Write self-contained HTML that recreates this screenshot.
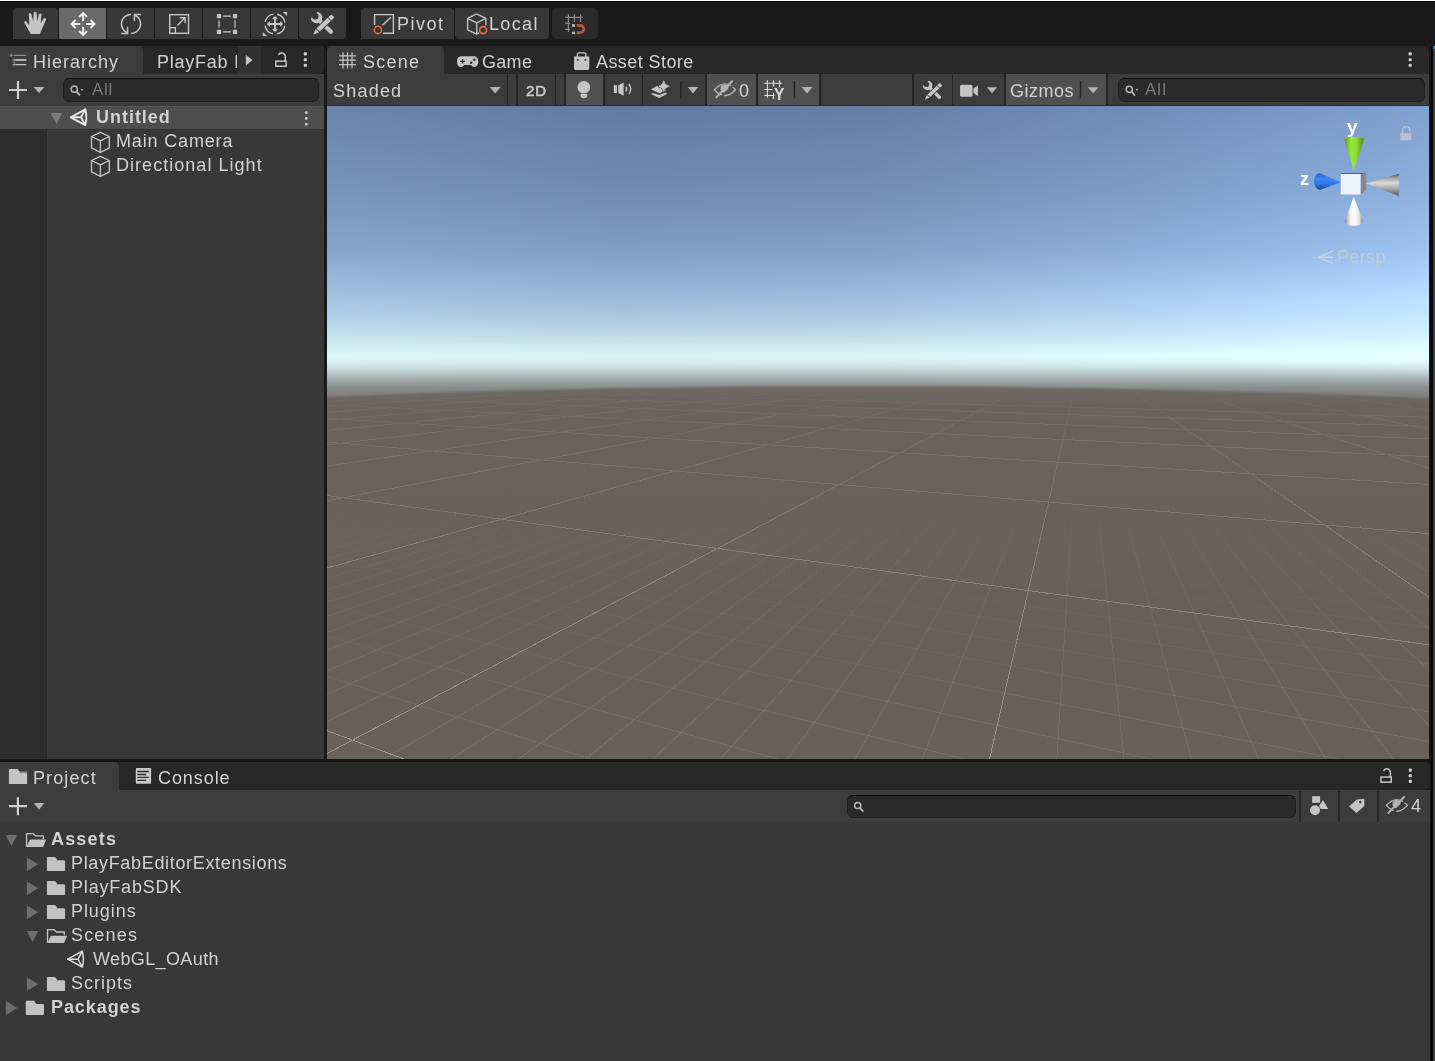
<!DOCTYPE html>
<html><head><meta charset="utf-8"><title>Unity</title>
<style>
html,body{margin:0;padding:0;background:#191919;overflow:hidden;}
body{width:1435px;height:1061px;position:relative;overflow:hidden;font-family:"Liberation Sans",sans-serif;}
.a{position:absolute;}
.t{position:absolute;white-space:pre;will-change:transform;}
svg{position:absolute;overflow:visible;}
</style></head><body>
<div class="a" style="left:0px;top:0px;width:1435px;height:1px;background:#ffffff;"></div>
<div class="a" style="left:0px;top:1px;width:1435px;height:1px;background:#0a0a0a;"></div>
<div class="a" style="left:0px;top:2px;width:1435px;height:44px;background:#191919;"></div>
<div class="a" style="left:13px;top:8px;width:45px;height:31px;background:#383838;border-radius:4px 4px 0 0;"></div>
<div class="a" style="left:59px;top:8px;width:47px;height:31px;background:#6a6a6a;"></div>
<div class="a" style="left:107px;top:8px;width:47px;height:31px;background:#383838;"></div>
<div class="a" style="left:155px;top:8px;width:47px;height:31px;background:#383838;"></div>
<div class="a" style="left:203px;top:8px;width:47px;height:31px;background:#383838;"></div>
<div class="a" style="left:251px;top:8px;width:47px;height:31px;background:#383838;"></div>
<div class="a" style="left:299px;top:8px;width:47px;height:31px;background:#383838;border-radius:0 0 4px 4px;"></div>
<div class="a" style="left:361px;top:8px;width:92.5px;height:31px;background:#383838;border-radius:4px 4px 0 0;"></div>
<div class="a" style="left:455px;top:8px;width:94px;height:31px;background:#383838;border-radius:0 0 4px 4px;"></div>
<div class="a" style="left:551.6px;top:7.8px;width:46.799999999999955px;height:31.499999999999996px;background:#2a2a2a;border-radius:5px;"></div>
<div class="a" style="left:0px;top:46px;width:324px;height:28px;background:#282828;border-radius:0 0 5px 0;"></div>
<div class="a" style="left:0px;top:46px;width:143px;height:28px;background:#3c3c3c;border-radius:0 5px 0 0;"></div>
<div class="a" style="left:237.6px;top:46px;width:23.400000000000006px;height:28px;background:#313131;"></div>
<div class="a" style="left:0px;top:74px;width:324px;height:32px;background:#3c3c3c;"></div>
<div class="a" style="left:0px;top:106px;width:324px;height:653px;background:#383838;"></div>
<div class="a" style="left:0px;top:106px;width:47px;height:653px;background:#2d2d2d;"></div>
<div class="a" style="left:46px;top:130px;width:1px;height:629px;background:#2a2a2a;"></div>
<div class="a" style="left:47px;top:130px;width:1px;height:629px;background:#3b3b3b;"></div>
<div class="a" style="left:0px;top:106px;width:324px;height:23px;background:#4e4e4e;"></div>
<div class="a" style="left:0px;top:106px;width:324px;height:1px;background:#545454;"></div>
<div class="a" style="left:0px;top:129px;width:324px;height:1px;background:#303030;"></div>
<div class="a" style="left:63px;top:78px;width:256px;height:24px;background:#2a2a2a;border-radius:6px;box-sizing:border-box;border:1px solid #212121;border-top-color:#0d0d0d;"></div>
<div class="a" style="left:324px;top:46px;width:3px;height:713px;background:#191919;"></div>
<div class="a" style="left:327px;top:46px;width:1102px;height:28px;background:#282828;border-radius:0 5px 0 0;"></div>
<div class="a" style="left:327px;top:46px;width:117px;height:28px;background:#3c3c3c;border-radius:5px 5px 0 0;"></div>
<div class="a" style="left:327px;top:74px;width:1102px;height:32px;background:#3c3c3c;"></div>
<div class="a" style="left:565.5px;top:74px;width:38.10000000000002px;height:31px;background:#505050;"></div>
<div class="a" style="left:707px;top:74px;width:49px;height:31px;background:#505050;"></div>
<div class="a" style="left:758px;top:74px;width:61px;height:31px;background:#505050;"></div>
<div class="a" style="left:1006px;top:74px;width:100px;height:31px;background:#505050;"></div>
<div class="a" style="left:506.8px;top:74px;width:1.5px;height:31px;background:#242424;"></div>
<div class="a" style="left:516.4px;top:74px;width:1.5px;height:31px;background:#242424;"></div>
<div class="a" style="left:554.8px;top:74px;width:1.5px;height:31px;background:#242424;"></div>
<div class="a" style="left:564.2px;top:74px;width:1.5px;height:31px;background:#242424;"></div>
<div class="a" style="left:603.4px;top:74px;width:1.5px;height:31px;background:#242424;"></div>
<div class="a" style="left:641.8px;top:74px;width:1.5px;height:31px;background:#242424;"></div>
<div class="a" style="left:705.4px;top:74px;width:1.5px;height:31px;background:#242424;"></div>
<div class="a" style="left:756.2px;top:74px;width:1.5px;height:31px;background:#242424;"></div>
<div class="a" style="left:819px;top:74px;width:1.5px;height:31px;background:#242424;"></div>
<div class="a" style="left:912.2px;top:74px;width:1.5px;height:31px;background:#242424;"></div>
<div class="a" style="left:951.6px;top:74px;width:1.5px;height:31px;background:#242424;"></div>
<div class="a" style="left:1004.4px;top:74px;width:1.5px;height:31px;background:#242424;"></div>
<div class="a" style="left:1106px;top:74px;width:1.5px;height:31px;background:#242424;"></div>
<div class="a" style="left:327px;top:105px;width:1102px;height:1px;background:#2a2a2a;"></div>
<div class="a" style="left:1118px;top:78px;width:307px;height:24px;background:#2a2a2a;border-radius:6px;box-sizing:border-box;border:1px solid #212121;border-top-color:#0d0d0d;"></div>
<div class="a" style="left:1429px;top:46px;width:1.5px;height:1015px;background:#161616;"></div>
<div class="a" style="left:1430.5px;top:46px;width:2.2000000000000455px;height:1015px;background:#040404;"></div>
<div class="a" style="left:1432.7px;top:46px;width:2.2999999999999545px;height:1015px;background:#3a3a3a;"></div>
<div class="a" style="left:1432.7px;top:46px;width:2.2999999999999545px;height:3px;background:#3a79bb;"></div>
<div class="a" style="left:0px;top:759px;width:1430px;height:3px;background:#151515;"></div>
<div class="a" style="left:0px;top:762px;width:1430px;height:28px;background:#282828;border-radius:0 5px 5px 0;"></div>
<div class="a" style="left:0px;top:762px;width:119px;height:28px;background:#3c3c3c;border-radius:0 5px 0 0;"></div>
<div class="a" style="left:0px;top:790px;width:1430px;height:32px;background:#3c3c3c;"></div>
<div class="a" style="left:0px;top:822px;width:1430px;height:239px;background:#383838;"></div>
<div class="a" style="left:847px;top:795px;width:449px;height:23px;background:#2a2a2a;border-radius:6px;box-sizing:border-box;border:1px solid #212121;border-top-color:#0d0d0d;"></div>
<div class="a" style="left:1299px;top:791px;width:1.5px;height:30.5px;background:#262626;"></div>
<div class="a" style="left:1338.2px;top:791px;width:1.5px;height:30.5px;background:#262626;"></div>
<div class="a" style="left:1377.4px;top:791px;width:1.5px;height:30.5px;background:#262626;"></div>
<svg style="left:327px;top:106px" width="1102" height="653" viewBox="327 106 1102 653">
<defs>
<linearGradient id="sky" x1="0" y1="0" x2="0" y2="1"><stop offset="0.0000" stop-color="#627ba3"/><stop offset="0.0107" stop-color="#637ca4"/><stop offset="0.0674" stop-color="#6983aa"/><stop offset="0.1302" stop-color="#6f8bb1"/><stop offset="0.2221" stop-color="#809dc4"/><stop offset="0.2680" stop-color="#91afd2"/><stop offset="0.3139" stop-color="#a5c3de"/><stop offset="0.3507" stop-color="#bfd9e8"/><stop offset="0.3828" stop-color="#daf4f5"/><stop offset="0.3920" stop-color="#d5edee"/><stop offset="0.4012" stop-color="#c8dbda"/><stop offset="0.4135" stop-color="#adb9b8"/><stop offset="0.4227" stop-color="#98a1a0"/><stop offset="0.4319" stop-color="#888c8b"/><stop offset="0.4472" stop-color="#7c7e7c"/><stop offset="0.4655" stop-color="#6e6966"/><stop offset="1.0000" stop-color="#6b635e"/></linearGradient>
<linearGradient id="rlight" x1="0" y1="0" x2="1" y2="0"><stop offset="0" stop-color="#080909"/><stop offset="0.266" stop-color="#000"/><stop offset="0.493" stop-color="#030304"/><stop offset="0.747" stop-color="#0e1217"/><stop offset="0.965" stop-color="#1c232b"/><stop offset="1" stop-color="#1f262f"/></linearGradient>
<linearGradient id="rfade" x1="0" y1="0" x2="0" y2="1"><stop offset="0" stop-color="#fff"/><stop offset="0.3" stop-color="#fff"/><stop offset="0.383" stop-color="#777"/><stop offset="0.43" stop-color="#000"/><stop offset="1" stop-color="#000"/></linearGradient>
<mask id="rmask"><rect x="327" y="106" width="1102" height="653" fill="url(#rfade)"/></mask>
<linearGradient id="gnd" gradientUnits="userSpaceOnUse" x1="0" y1="386" x2="0" y2="759"><stop offset="0" stop-color="#6f6a67"/><stop offset="0.035" stop-color="#6c6560"/><stop offset="0.1" stop-color="#6a625d"/><stop offset="1" stop-color="#69615b"/></linearGradient>
<filter id="hb" x="-5%" y="-5%" width="110%" height="110%"><feGaussianBlur stdDeviation="0 0.8"/></filter>
<clipPath id="vp"><rect x="327" y="106" width="1102" height="653"/></clipPath>
<linearGradient id="gG" x1="0" y1="0" x2="1" y2="0"><stop offset="0" stop-color="#5c9a22"/><stop offset="0.35" stop-color="#96e83a"/><stop offset="0.6" stop-color="#8fdf36"/><stop offset="1" stop-color="#4f8a1c"/></linearGradient>
<linearGradient id="gB" x1="0" y1="0" x2="0" y2="1"><stop offset="0" stop-color="#2460c8"/><stop offset="0.35" stop-color="#3b86f6"/><stop offset="0.65" stop-color="#2f78ee"/><stop offset="1" stop-color="#173f8e"/></linearGradient>
<linearGradient id="gR" x1="0" y1="0" x2="0" y2="1"><stop offset="0" stop-color="#4e4e4e"/><stop offset="0.2" stop-color="#a8a8a8"/><stop offset="0.42" stop-color="#dcdcdc"/><stop offset="0.7" stop-color="#a0a0a0"/><stop offset="1" stop-color="#555"/></linearGradient>
<linearGradient id="gW" x1="0" y1="0" x2="1" y2="0"><stop offset="0" stop-color="#8d8d8d"/><stop offset="0.3" stop-color="#f2f2f2"/><stop offset="0.55" stop-color="#ffffff"/><stop offset="0.8" stop-color="#e2e2e2"/><stop offset="1" stop-color="#8a8a8a"/></linearGradient>
</defs>
<g clip-path="url(#vp)">
<rect x="327" y="106" width="1102" height="653" fill="url(#sky)"/>
<rect x="327" y="106" width="1102" height="653" fill="url(#rlight)" mask="url(#rmask)" style="mix-blend-mode:plus-lighter"/>
<path d="M287,398.5 Q868,372.6 1469,400 L1469,789 L287,789 Z" fill="url(#gnd)" filter="url(#hb)"/>
<linearGradient id="fmaj" gradientUnits="userSpaceOnUse" x1="0" y1="380" x2="0" y2="759"><stop offset="0.0000" stop-color="#ffffff" stop-opacity="0"/><stop offset="0.0317" stop-color="#ffffff" stop-opacity="0"/><stop offset="0.0528" stop-color="#ffffff" stop-opacity="0.03"/><stop offset="0.1583" stop-color="#ffffff" stop-opacity="0.07"/><stop offset="0.2639" stop-color="#ffffff" stop-opacity="0.1"/><stop offset="0.4459" stop-color="#ffffff" stop-opacity="0.19"/><stop offset="0.7124" stop-color="#ffffff" stop-opacity="0.26"/><stop offset="1.0000" stop-color="#ffffff" stop-opacity="0.33"/></linearGradient>
<linearGradient id="fminA" gradientUnits="userSpaceOnUse" x1="0" y1="380" x2="0" y2="759"><stop offset="0.0000" stop-color="#ffffff" stop-opacity="0"/><stop offset="0.3166" stop-color="#ffffff" stop-opacity="0"/><stop offset="0.4749" stop-color="#ffffff" stop-opacity="0.035"/><stop offset="0.6860" stop-color="#ffffff" stop-opacity="0.055"/><stop offset="0.8443" stop-color="#ffffff" stop-opacity="0.07"/><stop offset="1.0000" stop-color="#ffffff" stop-opacity="0.085"/></linearGradient>
<linearGradient id="fminB" gradientUnits="userSpaceOnUse" x1="0" y1="380" x2="0" y2="759"><stop offset="0.0000" stop-color="#ffffff" stop-opacity="0"/><stop offset="0.4222" stop-color="#ffffff" stop-opacity="0"/><stop offset="0.5805" stop-color="#ffffff" stop-opacity="0.02"/><stop offset="0.7388" stop-color="#ffffff" stop-opacity="0.04"/><stop offset="0.8971" stop-color="#ffffff" stop-opacity="0.065"/><stop offset="1.0000" stop-color="#ffffff" stop-opacity="0.085"/></linearGradient>
<path d="M349.7,501.0L-1119.8,790.0M373.9,501.0L-1047.3,790.0M398.0,501.0L-974.9,790.0M422.1,501.0L-902.4,790.0M446.2,501.0L-829.9,790.0M470.3,501.0L-757.4,790.0M494.4,501.0L-684.9,790.0M518.5,501.0L-612.4,790.0M542.6,501.0L-539.9,790.0M590.8,501.0L-394.9,790.0M614.9,501.0L-322.4,790.0M639.0,501.0L-250.0,790.0M663.1,501.0L-177.5,790.0M687.3,501.0L-105.0,790.0M711.4,501.0L-32.5,790.0M735.5,501.0L40.0,790.0M759.6,501.0L112.5,790.0M783.7,501.0L185.0,790.0M831.9,501.0L330.0,790.0M856.0,501.0L402.4,790.0M880.1,501.0L474.9,790.0M904.2,501.0L547.4,790.0M928.3,501.0L619.9,790.0M952.4,501.0L692.4,790.0M976.5,501.0L764.9,790.0M1000.7,501.0L837.4,790.0M1024.8,501.0L909.9,790.0M1073.0,501.0L1054.9,790.0M1097.1,501.0L1127.3,790.0M1121.2,501.0L1199.8,790.0M1145.3,501.0L1272.3,790.0M1169.4,501.0L1344.8,790.0M1193.5,501.0L1417.3,790.0M1217.6,501.0L1489.8,790.0M1241.7,501.0L1562.3,790.0M1265.8,501.0L1634.8,790.0M1314.0,501.0L1779.8,790.0M1338.2,501.0L1852.2,790.0M1362.3,501.0L1924.7,790.0M1386.4,501.0L1997.2,790.0M1410.5,501.0L2069.7,790.0" stroke="url(#fminA)" stroke-width="1" fill="none" shape-rendering="crispEdges"/>
<path d="M-107.4,541.0L690.5,790.0M-21.9,541.0L891.7,790.0M63.6,541.0L1093.0,790.0M149.2,541.0L1294.3,790.0M234.7,541.0L1495.5,790.0M320.2,541.0L1696.8,790.0M405.7,541.0L1898.0,790.0M491.3,541.0L2099.3,790.0M576.8,541.0L2300.6,790.0M747.8,541.0L2703.1,790.0M833.4,541.0L2904.3,790.0M918.9,541.0L3105.6,790.0M1004.4,541.0L3306.8,790.0M1089.9,541.0L3508.1,790.0M1175.5,541.0L3709.4,790.0M1261.0,541.0L3910.6,790.0M1346.5,541.0L4111.9,790.0M1432.0,541.0L4313.1,790.0" stroke="url(#fminB)" stroke-width="1" fill="none" shape-rendering="crispEdges"/>
<path d="M350.5,393.0L-7716.4,790.0M410.8,393.0L-6991.5,790.0M471.0,393.0L-6266.6,790.0M531.3,393.0L-5541.7,790.0M591.6,393.0L-4816.8,790.0M651.8,393.0L-4091.9,790.0M712.1,393.0L-3367.0,790.0M772.4,393.0L-2642.1,790.0M832.6,393.0L-1917.2,790.0M892.9,393.0L-1192.3,790.0M953.2,393.0L-467.4,790.0M1013.4,393.0L257.5,790.0M1073.7,393.0L982.4,790.0M1134.0,393.0L1707.3,790.0M1194.3,393.0L2432.2,790.0M1254.5,393.0L3157.1,790.0M1314.8,393.0L3882.0,790.0M1375.1,393.0L4606.9,790.0M-598.4,393.0L489.2,790.0M-431.0,393.0L2501.8,790.0M-263.7,393.0L4514.4,790.0M-96.4,393.0L6527.0,790.0M70.9,393.0L8539.6,790.0M238.3,393.0L10552.2,790.0M405.6,393.0L12564.8,790.0M572.9,393.0L14577.3,790.0" stroke="url(#fmaj)" stroke-width="1" fill="none" shape-rendering="crispEdges"/>
<path d="M1344.2,139.2 Q1344.4,137.2 1354,137 Q1363.8,137.2 1364,139.2 L1354.2,169.2 L1353.4,169.2 Z" fill="url(#gG)"/>
<path d="M1340.8,182.3 L1319.5,172.9 Q1314,175 1314,181.6 Q1314,188 1319.5,189.9 Z" fill="url(#gB)"/>
<path d="M1366.5,183.4 L1398.8,173.8 L1398.8,195.9 Z" fill="url(#gR)"/>
<path d="M1353.8,196.4 L1362.9,221 Q1362.6,225.6 1353.8,225.8 Q1345,225.6 1344.8,221 Z" fill="url(#gW)"/>
<path d="M1341.4,172.9 L1366,172.9 L1366,190.2 L1360.6,194.7 L1360.6,173.9 Z" fill="#85878c"/>
<path d="M1341.4,172.9 L1366,172.9 L1360.6,174 L1340.8,174 Z" fill="#4e4e50"/>
<rect x="1340.8" y="173.9" width="19.8" height="20.6" fill="#eff3fd"/>
<g opacity="0.75"><rect x="1400.3" y="133.2" width="11" height="7" fill="#c9ccd2"/><path d="M1402.6,133 V130.3 A3.6,3.6 0 0 1 1409.8,130.3 V131.2" stroke="#c9ccd2" stroke-width="1.5" fill="none"/></g>
<path d="M1333,250.9 L1318.3,257.3 L1333,263.7 M1318.3,257.3 H1333" stroke="#d4dbe6" stroke-opacity="0.8" stroke-width="1.4" fill="none"/>
</g></svg>
<svg style="left:0;top:0" width="1435" height="1061" viewBox="0 0 1435 1061" fill="none" stroke-linecap="butt" stroke-linejoin="miter">
<path fill="#c4c4c4" d="M30.8,34 L27.6,28.6 L24.4,22.8 C23.9,21.4 25.5,20.4 26.4,21.5 L29.3,25.6 L28.8,14.7 C28.8,12.9 31.3,12.8 31.5,14.6 L33.2,20.9 L33.7,13.2 C33.8,11.4 36.4,11.4 36.6,13.2 L37.3,21.2 L38.8,14.4 C39.2,12.8 41.7,13.2 41.5,14.9 L40.7,23.2 L43.4,18.7 C44.3,17.4 46.5,18.4 45.9,19.9 L41.8,29.6 L40,34 Z"/>
<g stroke="#f2f2f2" stroke-width="1.9"><path d="M83.07,13.2 V21.1 M83.07,26.9 V34.8 M72,24 H80.2 M86,24 H94.1"/><path d="M79.1,17 L83.07,13 L87.05,17 M79.1,31 L83.07,35 L87.05,31 M75.6,20 L71.6,24 L75.6,28 M90.5,20 L94.5,24 L90.5,28" stroke-linejoin="miter"/></g>
<g stroke="#c4c4c4" stroke-width="1.5"><path d="M131,14.4 A9.5,9.5 0 0 0 127.6,32.8"/><path d="M121.1,33.4 H127.6 V27"/><path d="M131,33.4 A9.5,9.5 0 0 0 134.4,15"/><path d="M141,14.4 H134.4 V20.9"/></g>
<g stroke="#c4c4c4" stroke-width="1.4"><rect x="169.7" y="14.7" width="18.8" height="18.6"/><path d="M169.7,27.6 H175.4 V33.3"/><path d="M177.4,25.4 L184.8,18 M179.6,17.7 H185.1 V23.2"/></g>
<g fill="#c4c4c4"><rect x="216.9" y="14" width="4.2" height="4.2"/><rect x="232.9" y="14" width="4.2" height="4.2"/><rect x="216.9" y="29.8" width="4.2" height="4.2"/><rect x="232.9" y="29.8" width="4.2" height="4.2"/></g>
<g stroke="#d0d0d0" stroke-width="1.1"><path d="M223.2,16.1 H230.8 M223.2,31.9 H230.8 M219,20.2 V27.8 M235,20.2 V27.8"/></g>
<circle cx="275" cy="24" r="10" stroke="#c4c4c4" stroke-width="1.4" stroke-dasharray="11.9 3.81" stroke-dashoffset="-1.9"/>
<path d="M275,18.4 V29.6 M269.4,24 H280.6" stroke="#c4c4c4" stroke-width="1.9"/>
<path fill="#c4c4c4" d="M275,15.9 L278.1,19.1 H271.9 Z M275,32.1 L278.1,28.9 H271.9 Z M266.8,24 L270,20.9 V27.1 Z M283.2,24 L280,20.9 V27.1 Z"/>
<path fill="#c4c4c4" d="M282.8,11.9 H287.1 V16 Z M262.8,31.9 V36 H267.1 Z"/>
<g transform="translate(321.8,23.6) scale(1) translate(-321.8,-23.6)"><circle cx="316.5" cy="17.5" r="5.8" fill="#c4c4c4"/><circle cx="315.3" cy="16.3" r="3.2" fill="#383838"/><path d="M315.3,16.3 L309.4,18.6 L308,9 L317.6,10.6 Z" fill="#383838"/><path d="M320.2,21.2 L330.9,31.8" stroke="#c4c4c4" stroke-width="4.2" stroke-linecap="round"/><path d="M313.82,29.71 L328.28,15.89 L332.63,20.44 L318.17,34.26 Z" fill="#383838"/><path fill="#c4c4c4" d="M313.10,34.75 L315.59,29.25 L315.96,28.91 L319.07,32.16 L318.70,32.51 Z M316.53,28.36 L327.67,17.71 L330.78,20.97 L319.64,31.61 Z M328.25,17.16 L330.34,15.16 Q331.28,14.26 331.91,14.91 L333.77,16.86 Q334.39,17.51 333.45,18.41 L331.36,20.41 Z"/></g>
<g stroke="#c4c4c4" stroke-width="1.4"><path d="M374.6,25 V14.6 H393.4 V33.3 H383"/><path d="M382.4,25.2 L390.9,17.3"/></g><circle cx="377.9" cy="29.9" r="3.6" stroke="#f26b3a" stroke-width="1.5"/>
<g stroke="#c4c4c4" stroke-width="1.3" stroke-linejoin="round"><path d="M476.7,13.9 L485.9,18.3 V25.6 M479.2,32.9 L476.7,34.2 L467.6,29.8 V18.3 L476.7,13.9"/><path d="M467.6,18.3 L476.7,22.8 L485.9,18.3 M476.7,22.8 V34"/></g><circle cx="483.1" cy="30.1" r="3.5" stroke="#f26b3a" stroke-width="1.6"/>
<g stroke="#8a8a8a" stroke-width="1.2"><path d="M568.4,14.2 V32 M574.4,14.2 V22 M580.5,14.2 V22 M565.2,17.4 H582.9 M565.2,23.4 H570.2 M565.2,29.4 H570.2"/></g>
<rect x="572" y="24.1" width="3" height="2.8" fill="#b4b4b4"/><rect x="572" y="31.6" width="3" height="2.5" fill="#b4b4b4"/>
<path d="M576.7,25.5 H580.25 A3.55,3.55 0 0 1 580.25,32.6 H576.7" stroke="#b05a3a" stroke-width="2.8"/>
<g stroke="#c4c4c4"><path d="M13.6,55.3 H26.3" stroke-width="1" opacity="0.75"/><path d="M15.2,60 H26.3" stroke-width="1.7"/><path d="M15.2,64.6 H26.3" stroke-width="1.3"/><path d="M11.2,53.4 V57 M9.6,55.3 H12.8 M14.2,58.4 V66.4 M12.6,60 H15 M12.6,64.6 H15" stroke-width="0.9" opacity="0.7"/></g>
<path fill="#c4c4c4" d="M245.9,54.9 L252.5,60.1 L245.9,65.4 Z"/>
<g stroke="#c4c4c4" stroke-width="1.5"><rect x="275.85" y="61.15" width="10.3" height="5.1"/><path d="M285.25,61.1 V56.5 A3.6,3.6 0 0 0 278.38,55.0"/></g>
<rect x="303.75" y="52.35" width="3.1" height="3.1" rx="0.9" fill="#d0d0d0"/><rect x="303.75" y="58.15" width="3.1" height="3.1" rx="0.9" fill="#d0d0d0"/><rect x="303.75" y="63.75" width="3.1" height="3.1" rx="0.9" fill="#d0d0d0"/>
<rect x="304.95" y="111.25" width="2.7" height="2.7" rx="0.9" fill="#c8c8c8"/><rect x="304.95" y="117.05" width="2.7" height="2.7" rx="0.9" fill="#c8c8c8"/><rect x="304.95" y="122.75" width="2.7" height="2.7" rx="0.9" fill="#c8c8c8"/>
<path d="M9,90 H27 M18,81 V99" stroke="#d0d0d0" stroke-width="2.2"/>
<path fill="#b4b4b4" d="M33.7,86.9 H44.4 L39.05,93.1 Z"/>
<circle cx="74.3" cy="89.2" r="3.1" stroke="#b8b8b8" stroke-width="1.5"/><path d="M76.5,91.60000000000001 L79.89999999999999,95.4" stroke="#b8b8b8" stroke-width="1.8"/><path fill="#b8b8b8" d="M80.5,89.0 H83.5 L82.0,90.9 Z"/>
<path fill="#7c7c7c" d="M50.8,113 H62.2 L56.5,124.3 Z"/>
<g stroke="#e6e6e6" stroke-width="1.9" stroke-linejoin="round" stroke-linecap="round"><path d="M70.8,117.3 L85.3,109.3 Q87.5,117.3 85.3,125.1 Z"/><path d="M70.8,117.3 H81 L85.1,109.7 M81,117.3 L85.1,124.7"/></g>
<g stroke="#c6c6c6" stroke-width="1.3" stroke-linejoin="round"><path d="M100.4,132.3 L109.30000000000001,136.5 V147.9 L100.4,152.3 L91.5,147.9 V136.5 Z"/><path d="M91.5,136.5 L100.4,140.8 L109.30000000000001,136.5 M100.4,140.8 V152.3"/></g>
<g stroke="#c6c6c6" stroke-width="1.3" stroke-linejoin="round"><path d="M100.4,156.3 L109.30000000000001,160.5 V171.9 L100.4,176.3 L91.5,171.9 V160.5 Z"/><path d="M91.5,160.5 L100.4,164.8 L109.30000000000001,160.5 M100.4,164.8 V176.3"/></g>
<g stroke="#c4c4c4" stroke-width="1.2"><path d="M343,52.2 V68.4 M347.5,52.2 V68.4 M352,52.2 V68.4 M339.1,55.8 H355.9 M339.1,60.2 H355.9 M339.1,64.6 H355.9"/></g>
<path fill="#c4c4c4" d="M461.5,56.2 H473.8 C476.6,56.2 478.3,58.4 478.3,61.5 C478.3,64.6 476.8,67 474.4,67 C472.8,67 472,66 471.2,65 H464.1 C463.3,66 462.5,67 460.9,67 C458.5,67 457,64.6 457,61.5 C457,58.4 458.7,56.2 461.5,56.2 Z"/>
<path stroke="#282828" stroke-width="1.3" d="M462.6,59 V63.6 M460.3,61.3 H464.9"/><circle cx="471.3" cy="62.8" r="1.2" fill="#282828"/><circle cx="474.3" cy="59.8" r="1.2" fill="#282828"/>
<path fill="#c4c4c4" d="M574,56.6 H589.3 V68.6 Q589.3,70 587.9,70 H575.4 Q574,70 574,68.6 Z"/><path d="M577.4,57 V54.6 Q577.4,52.9 579.1,52.9 H584.2 Q585.9,52.9 585.9,54.6 V57" stroke="#c4c4c4" stroke-width="1.4"/>
<rect x="577" y="59" width="1.6" height="1.6" fill="#282828"/><rect x="584.7" y="59" width="1.6" height="1.6" fill="#282828"/>
<rect x="1408.65" y="52.35" width="3.1" height="3.1" rx="0.9" fill="#d0d0d0"/><rect x="1408.65" y="58.15" width="3.1" height="3.1" rx="0.9" fill="#d0d0d0"/><rect x="1408.65" y="63.75" width="3.1" height="3.1" rx="0.9" fill="#d0d0d0"/>
<path fill="#b4b4b4" d="M489.8,87 H500.6 L495.20000000000005,93.6 Z"/>
<circle cx="583.8" cy="87.3" r="6.3" fill="#c4c4c4"/><path fill="#c4c4c4" d="M580.6,93.9 H587.2 V95.6 Q587.2,98.2 583.9,98.2 Q580.6,98.2 580.6,95.6 Z"/>
<rect x="613.8" y="85.2" width="3.2" height="7.8" fill="#c4c4c4"/><path fill="#c4c4c4" d="M618.3,85.2 L623.6,82.6 V95.8 L618.3,93 Z"/><path d="M625.8,86.6 Q627.6,89.1 625.8,91.6 M628.8,84 Q632.6,89.1 628.8,94.2" stroke="#c4c4c4" stroke-width="1.4"/>
<path fill="#c4c4c4" d="M650.9,89.2 L657,86 L666.5,90 L659.5,93.2 Z"/><path fill="#c4c4c4" d="M650.9,93.9 L652.9,92.9 L659.5,95.1 L665.4,92.6 L667.3,93.7 L659.3,98.1 Z"/>
<path d="M663.7,80.8 Q664.5,85.4 669.3,86.25 Q664.5,87.1 663.7,91.3 Q662.9,87.1 658.9,86.25 Q662.9,85.4 663.7,80.8 Z" fill="#3c3c3c" stroke="#3c3c3c" stroke-width="2.2" stroke-linejoin="round"/><path d="M663.7,80.8 Q664.5,85.4 669.3,86.25 Q664.5,87.1 663.7,91.3 Q662.9,87.1 658.9,86.25 Q662.9,85.4 663.7,80.8 Z" fill="#c4c4c4" stroke="#c4c4c4" stroke-width="0.8" stroke-linejoin="round"/>
<path d="M680.8,81 V98.5" stroke="#262626" stroke-width="1.5"/>
<path fill="#b4b4b4" d="M687.7,87 H698.3 L693.0,93.6 Z"/>
<path d="M714.4,89.7 Q725,78.10000000000001 735.6,89.7 Q725,101.3 714.4,89.7 Z" stroke="#b2b2b2" stroke-width="1.4" stroke-linejoin="round"/><circle cx="724.7" cy="88.5" r="4.1" fill="#b2b2b2"/><path d="M717.6,98.3 L733.4,82.4" stroke="#505050" stroke-width="2" transform="translate(1.2,1.2)"/><path d="M716.4,97.2 L732.2,81.3" stroke="#b2b2b2" stroke-width="2" stroke-linecap="round"/>
<g stroke="#dcdcdc" stroke-width="1.1"><path d="M767.4,80.2 V97.7 M773.5,80.2 V86.6 M773.5,93.3 V98.9 M779.5,80.2 V87.4 M764.3,83.2 H781.9 M764.3,89.5 H772.4 M764.3,95.5 H774.6"/></g>
<path d="M794.4,81 V98.5" stroke="#262626" stroke-width="1.5"/>
<path fill="#b4b4b4" d="M801.7,87 H812.5 L807.1,93.6 Z"/>
<g transform="translate(931.9,90.5) scale(0.826) translate(-321.8,-23.6)"><circle cx="316.5" cy="17.5" r="5.8" fill="#c4c4c4"/><circle cx="315.3" cy="16.3" r="3.2" fill="#3c3c3c"/><path d="M315.3,16.3 L309.4,18.6 L308,9 L317.6,10.6 Z" fill="#3c3c3c"/><path d="M320.2,21.2 L330.9,31.8" stroke="#c4c4c4" stroke-width="4.2" stroke-linecap="round"/><path d="M313.82,29.71 L328.28,15.89 L332.63,20.44 L318.17,34.26 Z" fill="#3c3c3c"/><path fill="#c4c4c4" d="M313.10,34.75 L315.59,29.25 L315.96,28.91 L319.07,32.16 L318.70,32.51 Z M316.53,28.36 L327.67,17.71 L330.78,20.97 L319.64,31.61 Z M328.25,17.16 L330.34,15.16 Q331.28,14.26 331.91,14.91 L333.77,16.86 Q334.39,17.51 333.45,18.41 L331.36,20.41 Z"/></g>
<rect x="960.1" y="84.8" width="12.4" height="12" rx="1.6" fill="#c4c4c4"/><path fill="#c4c4c4" d="M973.4,88.6 L978,85.6 V96 L973.4,93 Z"/>
<path fill="#b4b4b4" d="M986.8,87.2 H997.2 L992.0,93.2 Z"/>
<path d="M1080.5,81 V98.5" stroke="#262626" stroke-width="1.5"/>
<path fill="#b4b4b4" d="M1087.7,87.2 H1098.6 L1093.15,93.2 Z"/>
<circle cx="1129.3" cy="89.3" r="3.1" stroke="#b8b8b8" stroke-width="1.5"/><path d="M1131.5,91.7 L1134.8999999999999,95.5" stroke="#b8b8b8" stroke-width="1.8"/><path fill="#b8b8b8" d="M1135.5,89.1 H1138.5 L1137.0,91.0 Z"/>
<path fill="#c4c4c4" d="M8.9,768.9 H17.6 L19.6,771.8 H27.1 V784 H8.9 Z"/><path d="M19.8,772.5 H27.1" stroke="#8c8c8c" stroke-width="1.4"/>
<rect x="135.8" y="768.1" width="15.3" height="15.7" rx="1" fill="#c8c8c8"/><path d="M137.3,771.5 H148.8 M137.3,774.5 H146.2 M137.3,777.4 H148.8 M137.3,780.4 H146.2" stroke="#2c2c2c" stroke-width="1.3"/>
<g stroke="#c4c4c4" stroke-width="1.5"><rect x="1380.95" y="777.05" width="10.3" height="5.1"/><path d="M1390.3500000000001,777.0 V772.4 A3.6,3.6 0 0 0 1383.48,770.9"/></g>
<rect x="1408.75" y="768.55" width="3.1" height="3.1" rx="0.9" fill="#d0d0d0"/><rect x="1408.75" y="774.25" width="3.1" height="3.1" rx="0.9" fill="#d0d0d0"/><rect x="1408.75" y="779.85" width="3.1" height="3.1" rx="0.9" fill="#d0d0d0"/>
<path d="M8.899999999999999,806.2 H26.9 M17.9,797.2 V815.2" stroke="#d0d0d0" stroke-width="2.2"/>
<path fill="#b4b4b4" d="M33.8,803.1 H44.3 L39.05,809.7 Z"/>
<circle cx="857.7" cy="805.5" r="3.1" stroke="#b8b8b8" stroke-width="1.5"/><path d="M859.9000000000001,807.9 L863.3000000000001,811.7" stroke="#b8b8b8" stroke-width="1.8"/>
<rect x="1312.1" y="796.2" width="8" height="6.6" fill="#c4c4c4"/><circle cx="1315" cy="810.2" r="5" fill="#c4c4c4"/><path fill="#c4c4c4" d="M1323,800 L1328.2,808.9 H1320.6 L1319,806 Z"/>
<path fill="#c4c4c4" d="M1349.1,806.2 L1357,799.4 L1364.2,798.7 L1364.4,806 L1356.4,813 Z"/><circle cx="1360.3" cy="802" r="1.3" fill="#3c3c3c"/>
<path d="M1386.3000000000002,805.4 Q1396.9,793.8 1407.5,805.4 Q1396.9,817.0 1386.3000000000002,805.4 Z" stroke="#b2b2b2" stroke-width="1.4" stroke-linejoin="round"/><circle cx="1396.6000000000001" cy="804.1999999999999" r="4.1" fill="#b2b2b2"/><path d="M1389.5,814.0 L1405.3000000000002,798.1" stroke="#3c3c3c" stroke-width="2" transform="translate(1.2,1.2)"/><path d="M1388.3000000000002,812.9 L1404.1000000000001,797.0" stroke="#b2b2b2" stroke-width="2" stroke-linecap="round"/>
<path fill="#6e6e6e" d="M5.7,835.1 H17.1 L11.4,846.1 Z"/>
<path d="M26.549999999999997,846.5 V833.55 H33.1 L35.3,835.9 H43.3 V838.9" stroke="#c6c6c6" stroke-width="1.3" stroke-linejoin="round"/><path fill="#c2c2c2" d="M29.9,839.6 H46.2 L43.099999999999994,847.0 H26.299999999999997 Z"/>
<path fill="#6e6e6e" d="M26.8,857.4 L38.3,864.3 L26.8,871.1999999999999 Z"/>
<path fill="#c2c2c2" d="M47.9,856.9 H54.5 Q55.4,856.9 55.9,857.8 L57.2,860.1999999999999 H64.1 Q65.1,860.1999999999999 65.1,861.1999999999999 V870.0 Q65.1,871.0 64.1,871.0 H47.9 Q46.9,871.0 46.9,870.0 V857.9 Q46.9,856.9 47.9,856.9 Z"/>
<path fill="#6e6e6e" d="M26.8,881.4 L38.3,888.3 L26.8,895.1999999999999 Z"/>
<path fill="#c2c2c2" d="M47.9,880.9 H54.5 Q55.4,880.9 55.9,881.8 L57.2,884.1999999999999 H64.1 Q65.1,884.1999999999999 65.1,885.1999999999999 V894.0 Q65.1,895.0 64.1,895.0 H47.9 Q46.9,895.0 46.9,894.0 V881.9 Q46.9,880.9 47.9,880.9 Z"/>
<path fill="#6e6e6e" d="M26.8,905.4 L38.3,912.3 L26.8,919.1999999999999 Z"/>
<path fill="#c2c2c2" d="M47.9,904.9 H54.5 Q55.4,904.9 55.9,905.8 L57.2,908.1999999999999 H64.1 Q65.1,908.1999999999999 65.1,909.1999999999999 V918.0 Q65.1,919.0 64.1,919.0 H47.9 Q46.9,919.0 46.9,918.0 V905.9 Q46.9,904.9 47.9,904.9 Z"/>
<path fill="#6e6e6e" d="M26.8,931.1 H38.2 L32.5,942.1 Z"/>
<path d="M47.55,942.6 V929.65 H54.1 L56.3,932 H64.3 V935" stroke="#c6c6c6" stroke-width="1.3" stroke-linejoin="round"/><path fill="#c2c2c2" d="M50.9,935.7 H67.2 L64.1,943.1 H47.3 Z"/>
<g stroke="#dcdcdc" stroke-width="1.5" stroke-linejoin="round" stroke-linecap="round"><path d="M67.8,959.2 L82.3,951.2 Q84.5,959.2 82.3,967.0 Z"/><path d="M67.8,959.2 H78 L82.1,951.6 M78,959.2 L82.1,966.6"/></g>
<path fill="#6e6e6e" d="M26.8,977.3 L38.3,984.1999999999999 L26.8,991.0999999999999 Z"/>
<path fill="#c2c2c2" d="M47.9,977 H54.5 Q55.4,977 55.9,977.9 L57.2,980.3 H64.1 Q65.1,980.3 65.1,981.3 V990.1 Q65.1,991.1 64.1,991.1 H47.9 Q46.9,991.1 46.9,990.1 V978 Q46.9,977 47.9,977 Z"/>
<path fill="#6e6e6e" d="M5.8,1001.1 L17.3,1008.0 L5.8,1014.9 Z"/>
<path fill="#c2c2c2" d="M26.8,1000.8 H33.4 Q34.3,1000.8 34.8,1001.6999999999999 L36.1,1004.0999999999999 H43.0 Q44.0,1004.0999999999999 44.0,1005.0999999999999 V1013.9 Q44.0,1014.9 43.0,1014.9 H26.8 Q25.8,1014.9 25.8,1013.9 V1001.8 Q25.8,1000.8 26.8,1000.8 Z"/>
</svg>
<div class="t" style="left:396.98px;top:12.86px;font-size:18px;line-height:22px;letter-spacing:1.527px;color:#d2d2d2;">Pivot</div>
<div class="t" style="left:489.28px;top:12.86px;font-size:18px;line-height:22px;letter-spacing:1.352px;color:#d2d2d2;">Local</div>
<div class="t" style="left:33.08px;top:50.76px;font-size:18px;line-height:22px;letter-spacing:1.001px;color:#d2d2d2;">Hierarchy</div>
<div class="t" style="left:156.98px;top:50.56px;font-size:18px;line-height:22px;letter-spacing:0.000px;color:#d2d2d2;letter-spacing:0.76px;width:80.3px;overflow:hidden;">PlayFab I</div>
<div class="t" style="left:91.93px;top:80.38px;font-size:16.8px;line-height:20px;letter-spacing:0.744px;color:#7a7a7a;">All</div>
<div class="t" style="left:95.88px;top:105.76px;font-size:18px;line-height:22px;letter-spacing:0.977px;color:#d2d2d2;font-weight:bold;">Untitled</div>
<div class="t" style="left:116.08px;top:129.76px;font-size:18px;line-height:22px;letter-spacing:0.839px;color:#d2d2d2;">Main Camera</div>
<div class="t" style="left:116.08px;top:153.76px;font-size:18px;line-height:22px;letter-spacing:1.035px;color:#d2d2d2;">Directional Light</div>
<div class="t" style="left:362.98px;top:51.06px;font-size:18px;line-height:22px;letter-spacing:1.223px;color:#d2d2d2;">Scene</div>
<div class="t" style="left:482.18px;top:51.06px;font-size:18px;line-height:22px;letter-spacing:0.303px;color:#d2d2d2;">Game</div>
<div class="t" style="left:596.18px;top:51.06px;font-size:18px;line-height:22px;letter-spacing:0.419px;color:#d2d2d2;">Asset Store</div>
<div class="t" style="left:332.58px;top:80.06px;font-size:18px;line-height:22px;letter-spacing:1.215px;color:#d2d2d2;">Shaded</div>
<div class="t" style="left:526.20px;top:81.60px;font-size:15px;line-height:18px;letter-spacing:0.913px;color:#c8c8c8;-webkit-text-stroke:0.6px #c8c8c8;">2D</div>
<div class="t" style="left:738.88px;top:80.06px;font-size:18px;line-height:22px;letter-spacing:1.424px;color:#d2d2d2;">0</div>
<div class="t" style="left:1009.58px;top:79.56px;font-size:18px;line-height:22px;letter-spacing:0.505px;color:#d2d2d2;">Gizmos</div>
<div class="t" style="left:1145.23px;top:80.38px;font-size:16.8px;line-height:20px;letter-spacing:1.144px;color:#7a7a7a;">All</div>
<div class="t" style="left:32.68px;top:767.16px;font-size:18px;line-height:22px;letter-spacing:1.118px;color:#d2d2d2;">Project</div>
<div class="t" style="left:158.18px;top:767.16px;font-size:18px;line-height:22px;letter-spacing:0.932px;color:#d2d2d2;">Console</div>
<div class="t" style="left:51.38px;top:827.76px;font-size:18px;line-height:22px;letter-spacing:1.179px;color:#d2d2d2;font-weight:bold;">Assets</div>
<div class="t" style="left:71.18px;top:852.16px;font-size:18px;line-height:22px;letter-spacing:0.670px;color:#d2d2d2;">PlayFabEditorExtensions</div>
<div class="t" style="left:71.18px;top:876.36px;font-size:18px;line-height:22px;letter-spacing:0.821px;color:#d2d2d2;">PlayFabSDK</div>
<div class="t" style="left:71.18px;top:900.16px;font-size:18px;line-height:22px;letter-spacing:0.932px;color:#d2d2d2;">Plugins</div>
<div class="t" style="left:71.18px;top:924.06px;font-size:18px;line-height:22px;letter-spacing:1.179px;color:#d2d2d2;">Scenes</div>
<div class="t" style="left:92.98px;top:948.26px;font-size:18px;line-height:22px;letter-spacing:0.379px;color:#d2d2d2;">WebGL_OAuth</div>
<div class="t" style="left:71.18px;top:972.06px;font-size:18px;line-height:22px;letter-spacing:0.987px;color:#d2d2d2;">Scripts</div>
<div class="t" style="left:51.18px;top:995.66px;font-size:18px;line-height:22px;letter-spacing:0.923px;color:#d2d2d2;font-weight:bold;">Packages</div>
<div class="t" style="left:1411.08px;top:795.26px;font-size:18px;line-height:22px;letter-spacing:1.524px;color:#d2d2d2;">4</div>
<div class="t" style="left:1346.64px;top:114.52px;font-size:19px;line-height:23px;letter-spacing:0.000px;color:#ffffff;font-weight:bold;">y</div>
<div class="t" style="left:1300.18px;top:167.66px;font-size:18px;line-height:22px;letter-spacing:0.000px;color:#ffffff;font-weight:bold;">z</div>
<div class="t" style="left:1337.38px;top:246.16px;font-size:18px;line-height:22px;letter-spacing:0.352px;color:rgba(208,206,204,0.66);">Persp</div>
<div class="t" style="left:773.68px;top:85.49px;font-size:15.6px;line-height:19px;letter-spacing:0.000px;color:#dcdcdc;font-weight:bold;">Y</div>
</body></html>
